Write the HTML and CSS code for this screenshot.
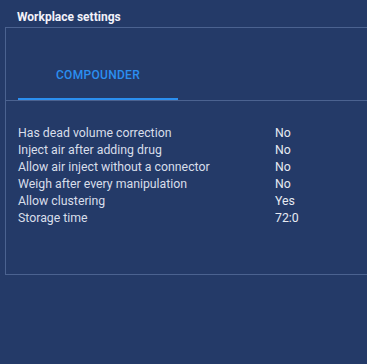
FILE: index.html
```html
<html>

<head>
	<link rel="stylesheet" href="styles.css">
</head>

<body>
	<div id="wrapper">
		<div class="title">Workplace settings</div>
		<div class="panel">
			<div class="tabs">
				<div class="tab active">COMPOUNDER</div>
			</div>
			<div class="settings">
				<span class="label">Has dead volume correction</span>
				<span class="value">No</span>
				<span class="label">Inject air after adding drug</span>
				<span class="value">No</span>
				<span class="label">Allow air inject without a connector</span>
				<span class="value">No</span>
				<span class="label">Weigh after every manipulation</span>
				<span class="value">No</span>
				<span class="label">Allow clustering</span>
				<span class="value">Yes</span>
				<span class="label">Storage time</span>
				<span class="value">72:0</span>
			</div>
		</div>
	</div>
</body>
</html>
```

FILE: styles.css
```css
* {
	margin: 0;
	padding: 0;
	box-sizing: border-box;
	font-family: Roboto, "Liberation Sans", sans-serif;
}

body {
	background: #243a68;
	overflow: hidden;
}

#wrapper {
	width: 367px;
	height: 364px;
}

.title {
	padding: 10px 0 0 17px;
	height: 27px;
	font-size: 12px;
	line-height: 14px;
	font-weight: bold;
	color: #f2f2fa;
}

.panel {
	margin-left: 5px;
	height: 248px;
	border: 1px solid #4b6290;
	border-right: none;
}

.tabs {
	display: flex;
	padding: 22px 0 0 12px;
	border-bottom: 1px solid #4b6290;
}

.tab {
	display: flex;
	align-items: center;
	justify-content: center;
	width: 160px;
	height: 50px;
	padding-top: 1px;
	font-size: 12px;
	font-weight: 500;
	letter-spacing: 0.3px;
	color: #2b8ff0;
	border-bottom: 2px solid transparent;
}

.tab.active {
	border-bottom-color: #2b8ff0;
}

.settings {
	display: grid;
	grid-template-columns: 257px auto;
	padding: 24px 0 0 12px;
	font-size: 12.3px;
	line-height: 17px;
}

.label {
	color: #d8deea;
}

.value {
	color: #e6eaf2;
}
```
